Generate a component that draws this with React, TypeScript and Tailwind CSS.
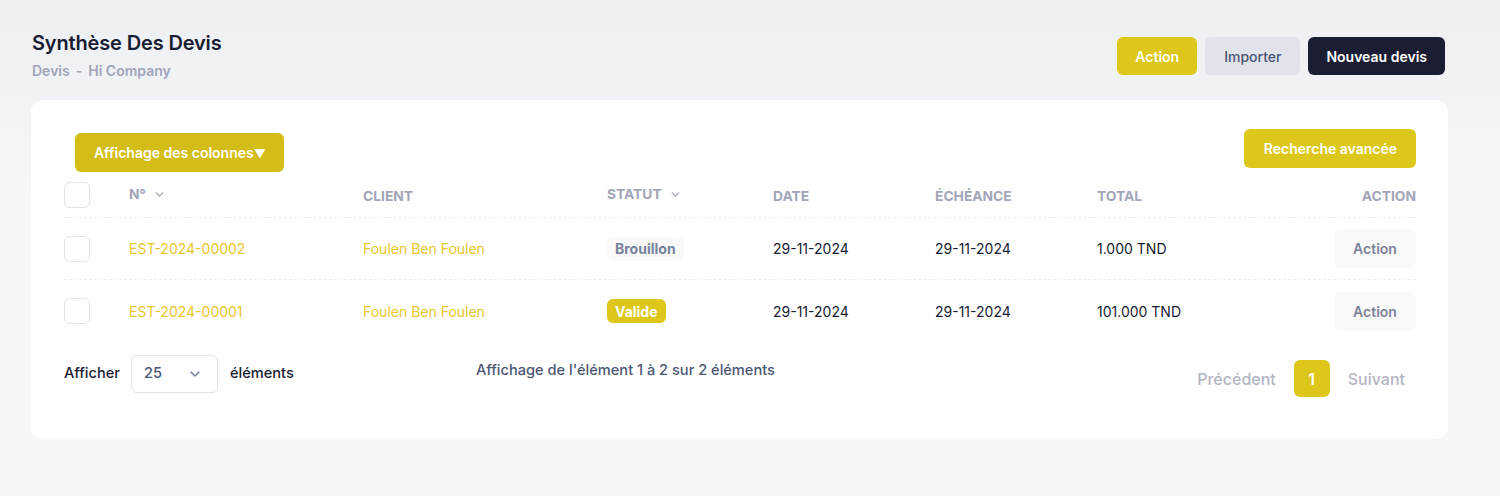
import React from "react";

const Chevron = ({ className = "" }: { className?: string }) => (
  <svg viewBox="0 0 16 16" className={className} fill="none" stroke="currentColor" strokeWidth="1.6" strokeLinecap="round" strokeLinejoin="round">
    <path d="M4 6l4 4 4-4" />
  </svg>
);

const Checkbox = () => (
  <div className="w-[26px] h-[26px] rounded-[6px] border border-[#e1e3ea] bg-white" />
);

const cols = "grid grid-cols-[65px_234px_244px_166px_162px_162px_160px_1fr] items-center";

const rows = [
  { id: "EST-2024-00002", client: "Foulen Ben Foulen", statut: "Brouillon", date: "29-11-2024", ech: "29-11-2024", total: "1.000 TND" },
  { id: "EST-2024-00001", client: "Foulen Ben Foulen", statut: "Valide", date: "29-11-2024", ech: "29-11-2024", total: "101.000 TND" },
];

export default function App() {
  return (
    <div
      className="min-h-[496px] w-full bg-gradient-to-b from-[#edeff3] to-[#f5f7fa] to-40% pl-[31px] pr-[52px] pt-[29px]"
      style={{ fontFamily: "Inter, 'Noto Sans', sans-serif" }}
    >
      {/* Header */}
      <div className="flex justify-between items-start pl-px pr-[3px]">
        <div className="flex flex-col gap-[4px]">
          <h1 className="text-[20px] leading-[28px] font-semibold text-[#181c32] tracking-[-0.15px]">Synthèse Des Devis</h1>
          <div className="flex items-center text-[14px] leading-[20px] font-semibold text-[#a1a5b7]">
            <span>Devis</span>
            <span className="mx-[6px]">-</span>
            <span>Hi Company</span>
          </div>
        </div>
        <div className="flex gap-2 mt-[8px]">
          <button className="h-[38px] px-[18px] rounded-[6px] bg-[#dcc71a] text-white text-[14px] font-semibold">Action</button>
          <button className="h-[38px] px-[19px] rounded-[6px] bg-[#e1e3ea] text-[#4b5675] text-[14px] font-medium">Importer</button>
          <button className="h-[38px] px-[18px] rounded-[6px] bg-[#1b1e33] text-white text-[14px] font-semibold">Nouveau devis</button>
        </div>
      </div>

      {/* Card */}
      <div className="mt-[19px] bg-white rounded-[12px] pl-[33px] pr-[32px] pt-[29px] pb-[42px]">
        <div className="flex justify-between items-start">
          <button className="ml-[11px] mt-[4px] h-[39px] pl-[19px] pr-[18px] rounded-[6px] bg-[#d4bd17] text-white text-[14px] font-semibold">
            Affichage des colonnes<span className="text-[12px]">▼</span>
          </button>
          <button className="h-[39px] pl-[20px] pr-[19px] rounded-[6px] bg-[#dcc71a] text-white text-[14px] font-semibold">
            Recherche avancée
          </button>
        </div>

        {/* Table header */}
        <div className={`${cols} h-[46px] border-b border-dashed border-[#eceef2] text-[13.8px] font-bold uppercase text-[#a1a5b7]`}>
          <div><Checkbox /></div>
          <div className="flex items-center gap-[7px] -mt-[1px]">N°<Chevron className="w-[13px] h-[13px]" /></div>
          <div className="mt-[3px]">Client</div>
          <div className="flex items-center gap-[7px] -mt-[1px]">Statut<Chevron className="w-[13px] h-[13px]" /></div>
          <div className="mt-[3px]">Date</div>
          <div className="mt-[3px]">Échéance</div>
          <div className="mt-[3px]">Total</div>
          <div className="mt-[3px] text-right">Action</div>
        </div>

        {rows.map((r, i) => (
          <div
            key={r.id}
            className={`${cols} h-[62px] text-[14px] font-normal ${i === 0 ? "border-b border-dashed border-[#eceef2]" : ""}`}
          >
            <div><Checkbox /></div>
            <div className="text-[#e5c72c]">{r.id}</div>
            <div className="text-[#e5c72c]">{r.client}</div>
            <div>
              {r.statut === "Valide" ? (
                <span className="inline-flex items-center h-[24px] px-[8px] rounded-[6px] bg-[#dcc71a] text-white font-bold">Valide</span>
              ) : (
                <span className="inline-flex items-center h-[24px] px-[8px] rounded-[6px] bg-[#f9f9f9] text-[#78829d] font-bold">Brouillon</span>
              )}
            </div>
            <div className="text-[#181c32]">{r.date}</div>
            <div className="text-[#181c32]">{r.ech}</div>
            <div className="text-[#181c32]">{r.total}</div>
            <div className="flex justify-end">
              <button className="h-[39px] w-[82px] rounded-[6px] bg-[#f9f9f9] text-[#7e8299] text-[14px] font-semibold">Action</button>
            </div>
          </div>
        ))}

        {/* Footer */}
        <div className="flex items-start mt-[13px]">
          <div className="flex items-center w-[412px] text-[14.6px] font-medium text-[#181c32]">
            <span>Afficher</span>
            <div className="ml-[11px] mr-[12px] h-[38px] w-[87px] rounded-[6px] border border-[#e1e3ea] flex items-center justify-between pl-[12px] pr-[14px] text-[#4b5675]">
              <span>25</span>
              <Chevron className="w-[16px] h-[16px] text-[#78829d]" />
            </div>
            <span>éléments</span>
          </div>
          <div className="mt-[4px] leading-[22px] text-[14.6px] font-medium text-[#4b5675]">
            Affichage de l'élément 1 à 2 sur 2 éléments
          </div>
          <div className="ml-auto mt-[5px] pr-[11px] flex items-center text-[16px] font-medium text-[#b5b5c3]">
            <span>Précédent</span>
            <span className="mx-[18px] w-[36px] h-[37px] rounded-[6px] bg-[#dcc71a] text-white font-semibold flex items-center justify-center">1</span>
            <span>Suivant</span>
          </div>
        </div>
      </div>
    </div>
  );
}
